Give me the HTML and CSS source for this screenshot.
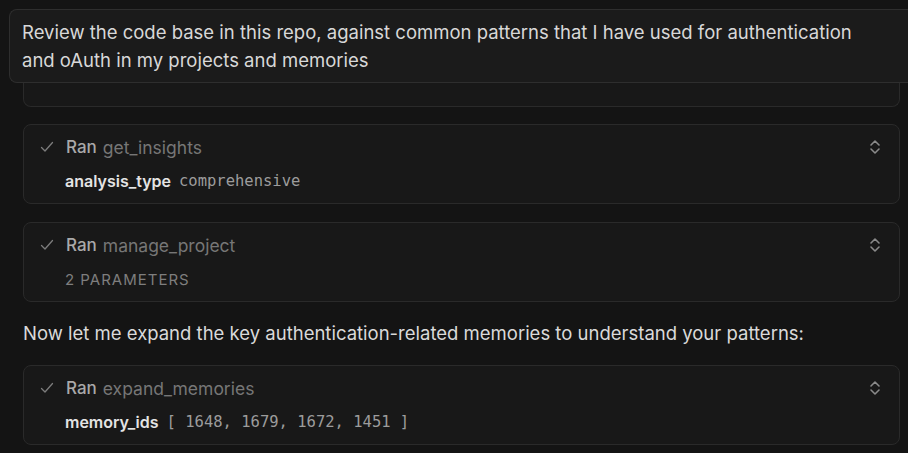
FILE: index.html
```html
<!DOCTYPE html>
<html>
<head>
<meta charset="utf-8">
<link rel="stylesheet" href="styles.css">
</head>
<body>
<div class="prompt">Review the code base in this repo, against common patterns that I have used for authentication and oAuth in my projects and memories</div>
<div class="thread">
  <div class="card card-tail"></div>

  <div class="card">
    <div class="card-head">
      <svg class="check" width="14" height="12" viewBox="0 0 14 12"><path d="M1.5 6.5 L5 10 L12.5 1.5" fill="none" stroke="#7c7c7c" stroke-width="1.3" stroke-linecap="round" stroke-linejoin="round"/></svg>
      <span class="ran">Ran</span><span class="tool">get_insights</span>
      <svg class="chev" width="12" height="16" viewBox="0 0 12 16"><path d="M2 6 L6 2 L10 6 M2 10 L6 14 L10 10" fill="none" stroke="#8a8a8a" stroke-width="1.6" stroke-linecap="round" stroke-linejoin="round"/></svg>
    </div>
    <div class="card-body"><span class="key">analysis_type</span><span class="val">comprehensive</span></div>
  </div>

  <div class="card">
    <div class="card-head">
      <svg class="check" width="14" height="12" viewBox="0 0 14 12"><path d="M1.5 6.5 L5 10 L12.5 1.5" fill="none" stroke="#7c7c7c" stroke-width="1.3" stroke-linecap="round" stroke-linejoin="round"/></svg>
      <span class="ran">Ran</span><span class="tool">manage_project</span>
      <svg class="chev" width="12" height="16" viewBox="0 0 12 16"><path d="M2 6 L6 2 L10 6 M2 10 L6 14 L10 10" fill="none" stroke="#8a8a8a" stroke-width="1.6" stroke-linecap="round" stroke-linejoin="round"/></svg>
    </div>
    <div class="card-body"><span class="params">2 PARAMETERS</span></div>
  </div>

  <p class="msg">Now let me expand the key authentication-related memories to understand your patterns:</p>

  <div class="card">
    <div class="card-head">
      <svg class="check" width="14" height="12" viewBox="0 0 14 12"><path d="M1.5 6.5 L5 10 L12.5 1.5" fill="none" stroke="#7c7c7c" stroke-width="1.3" stroke-linecap="round" stroke-linejoin="round"/></svg>
      <span class="ran">Ran</span><span class="tool">expand_memories</span>
      <svg class="chev" width="12" height="16" viewBox="0 0 12 16"><path d="M2 6 L6 2 L10 6 M2 10 L6 14 L10 10" fill="none" stroke="#8a8a8a" stroke-width="1.6" stroke-linecap="round" stroke-linejoin="round"/></svg>
    </div>
    <div class="card-body"><span class="key">memory_ids</span><span class="val">[ 1648, 1679, 1672, 1451 ]</span></div>
  </div>
</div>
</body>
</html>
```
FILE: styles.css
```css
html, body {
  margin: 0;
  padding: 0;
  background: #141414;
  overflow: hidden;
}
body {
  width: 908px;
  height: 453px;
  font-family: Inter, "Noto Sans", sans-serif;
  color: #d6d6d6;
}
.prompt {
  margin: 9px 0 0 9px;
  padding: 8px 44px 8px 12px;
  background: #1b1b1b;
  border: 1px solid #2e2e2e;
  border-right: none;
  border-radius: 8px 0 0 8px;
  font-size: 18.5px;
  line-height: 28px;
  color: #d8d8d8;
  height: 56px;
}
.thread {
  padding: 0 8px 0 23px;
  display: flex;
  flex-direction: column;
}
.card {
  background: #181818;
  border: 1px solid #2a2a2a;
  border-radius: 8px;
  margin-bottom: 18px;
  padding: 10px 0 10px 0;
}
.card-tail {
  border-top: none;
  border-radius: 0 0 8px 8px;
  padding: 0;
  box-sizing: border-box;
  height: 24px;
  margin-bottom: 17px;
}
.card-head {
  display: flex;
  align-items: center;
  height: 24px;
  padding-left: 16px;
  padding-right: 18px;
}
.check {
  margin-right: 12px;
}
.ran {
  font-size: 17px;
  font-weight: 500;
  color: #a9a9a9;
  margin-right: 6px;
}
.tool {
  font-size: 17.5px;
  color: #767676;
  flex: 1;
}
.card-body {
  padding-left: 41px;
  margin-top: 10px;
  height: 24px;
  display: flex;
  align-items: center;
}
.key {
  font-size: 16px;
  font-weight: 600;
  color: #e4e4e4;
  margin-right: 8px;
}
.val {
  font-family: "DejaVu Sans Mono", monospace;
  font-size: 15.5px;
  color: #9c9c9c;
}
.params {
  font-size: 15px;
  letter-spacing: 1px;
  color: #7e7e7e;
}
.msg {
  margin: 0 0 19px 0;
  font-size: 18.5px;
  line-height: 26px;
  color: #dadada;
}
```
